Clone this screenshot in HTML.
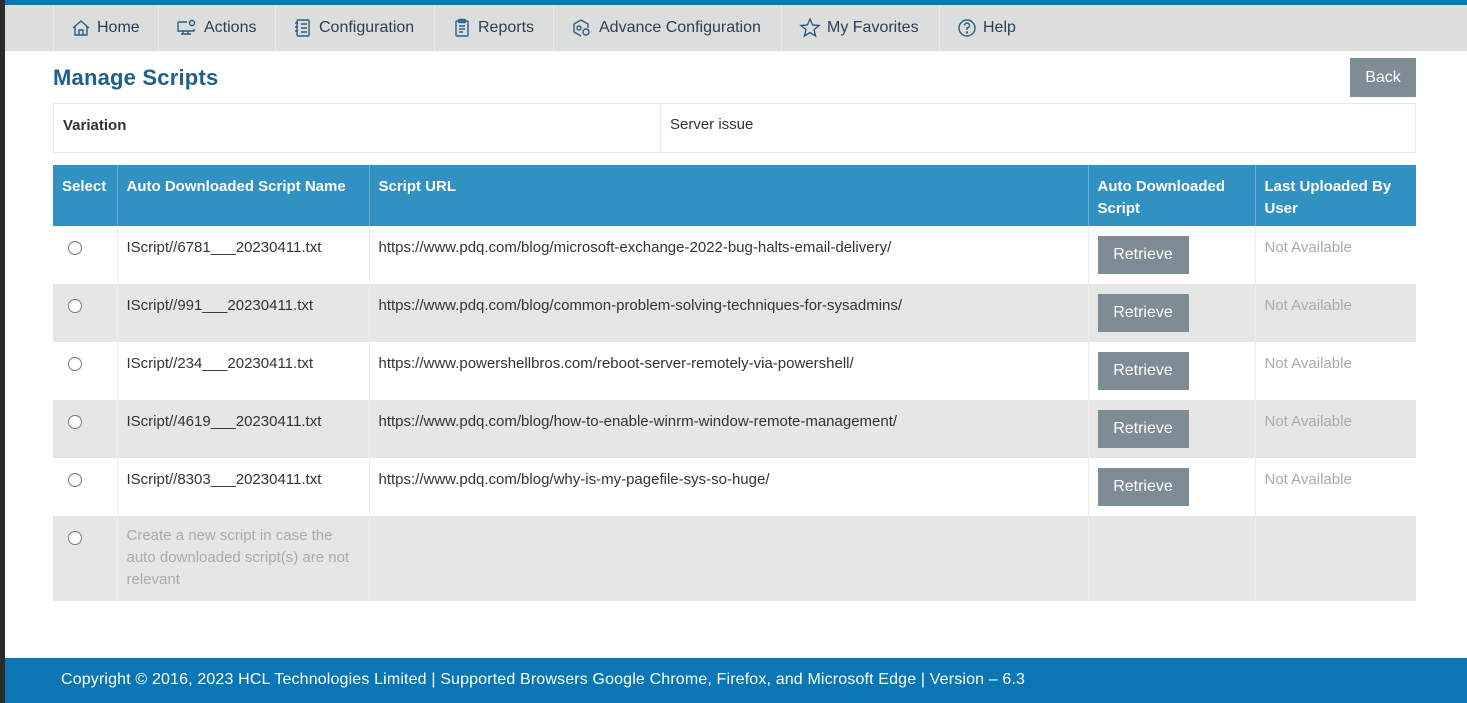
<!DOCTYPE html>
<html><head><meta charset="utf-8"><style>
*{box-sizing:border-box;margin:0;padding:0}
body{width:1467px;height:703px;overflow:hidden;background:#fff;font-family:"Liberation Sans",Arial,sans-serif;position:relative}
.lstrip{position:absolute;left:0;top:0;width:5px;height:703px;background:#2b2b2b;z-index:5}
.top{position:absolute;left:0;top:0;width:1467px;height:5px;background:#0a77b4}
.nav{position:absolute;left:0;top:5px;width:1467px;height:46px;background:#dcdedd}
.nav .it{position:absolute;top:0;height:46px;border-left:1px solid #e9eaea;display:flex;align-items:center;font-size:16px;color:#2a3f55;padding-left:17px}
.nav svg{margin-right:6px;stroke:#2a5c86;fill:none;stroke-width:1.4}
h1{position:absolute;left:53px;top:65px;font-size:22px;font-weight:bold;color:#1f5f8b;font-family:"Liberation Sans",sans-serif;letter-spacing:0.2px}
.back{position:absolute;left:1350px;top:58px;width:66px;height:39px;background:#7e8c96;color:#fff;font-size:16px;display:flex;align-items:center;justify-content:center}
.var{position:absolute;left:53px;top:103px;width:1363px;height:50px;border:1px solid #e6e6e6;font-size:15px;color:#333}
.var div{position:absolute;top:0;height:48px}
table{position:absolute;left:53px;top:165px;width:1363px;border-collapse:collapse;font-size:15px}
th{background:#3291c3;color:#fff;text-align:left;vertical-align:top;font-weight:bold;padding:11px 9px 0;height:61px;line-height:22px;border-left:1px solid #6aaed2}
th:first-child{border-left:none}
td{vertical-align:top;padding:13px 9px 0;height:58px;color:#333;border-left:1px solid #ededed;line-height:18px}
td:first-child{border-left:none}
tr.g td{background:#e6e6e6}
.r{display:inline-block;width:14px;height:14px;border:1px solid #777;border-radius:50%;background:#fff;margin:2px 0 0 6px}
.btn{display:block;width:91px;height:38px;background:#7e8c96;color:#fff;font-size:16px;display:flex;align-items:center;justify-content:center;margin:-3px 0 0 0}
.na{color:#aaa}
.foot{position:absolute;left:0;top:658px;width:1467px;height:45px;background:#0a77b4;color:#fff;font-size:16px;padding:13px 0 0 61px;letter-spacing:0.15px}
</style></head><body>
<div class="lstrip"></div>
<div class="top"></div>
<div class="nav">
<div class="it" style="left:53px;width:105px"><svg width="20" height="20" viewBox="0 0 20 20"><path d="M2 10 L10 3 L18 10 M4 8 V17 H16 V8 M8 17 V12 H12 V17"/></svg>Home</div>
<div class="it" style="left:158px;width:117px"><svg width="22" height="20" viewBox="0 0 22 20"><path d="M2 4 H11 M2 4 V13 H18 V11 M7 13 V16 M12 13 V16 M5 16 H15"/><circle cx="16" cy="5" r="2.5"/></svg>Actions</div>
<div class="it" style="left:275px;width:159px"><svg width="20" height="20" viewBox="0 0 20 20"><rect x="4" y="2" width="12" height="16" rx="1"/><path d="M2 5h3M2 9h3M2 13h3M8 6h6M8 10h6M8 14h6"/></svg>Configuration</div>
<div class="it" style="left:434px;width:119px"><svg width="20" height="20" viewBox="0 0 20 20"><rect x="4" y="3" width="12" height="15" rx="1"/><rect x="7" y="1.5" width="6" height="3"/><path d="M7 8h6M7 11h6M7 14h4"/></svg>Reports</div>
<div class="it" style="left:553px;width:228px"><svg width="22" height="20" viewBox="0 0 22 20"><path d="M10 2 L17 6 V10 M10 2 L3 6 V14 L10 18"/><circle cx="8" cy="10" r="2"/><circle cx="15" cy="14" r="3"/></svg>Advance Configuration</div>
<div class="it" style="left:781px;width:158px"><svg width="22" height="22" viewBox="0 0 22 22"><path d="M11 2 L13.6 8 L20 8.5 L15 12.7 L16.6 19 L11 15.6 L5.4 19 L7 12.7 L2 8.5 L8.4 8 Z"/></svg>My Favorites</div>
<div class="it" style="left:939px;width:100px"><svg width="20" height="20" viewBox="0 0 20 20"><circle cx="10" cy="10" r="8"/><path d="M7.5 7.5 A2.5 2.5 0 1 1 10 10 V12"/><circle cx="10" cy="14.5" r="0.5"/></svg>Help</div>
</div>
<h1>Manage Scripts</h1>
<div class="back">Back</div>
<div class="var"><div style="left:0;width:607px;border-right:1px solid #e6e6e6;font-weight:bold;padding:13px 0 0 9px">Variation</div><div style="left:607px;padding:12px 0 0 9px">Server issue</div></div>
<table>
<tr><th style="width:64px">Select</th><th style="width:252px">Auto Downloaded Script Name</th><th style="width:719px">Script URL</th><th style="width:167px">Auto Downloaded Script</th><th>Last Uploaded By User</th></tr>
<tr><td><span class="r"></span></td><td>IScript//6781___20230411.txt</td><td>https://www.pdq.com/blog/microsoft-exchange-2022-bug-halts-email-delivery/</td><td><span class="btn">Retrieve</span></td><td class="na">Not Available</td></tr>
<tr class="g"><td><span class="r"></span></td><td>IScript//991___20230411.txt</td><td>https://www.pdq.com/blog/common-problem-solving-techniques-for-sysadmins/</td><td><span class="btn">Retrieve</span></td><td class="na">Not Available</td></tr>
<tr><td><span class="r"></span></td><td>IScript//234___20230411.txt</td><td>https://www.powershellbros.com/reboot-server-remotely-via-powershell/</td><td><span class="btn">Retrieve</span></td><td class="na">Not Available</td></tr>
<tr class="g"><td><span class="r"></span></td><td>IScript//4619___20230411.txt</td><td>https://www.pdq.com/blog/how-to-enable-winrm-window-remote-management/</td><td><span class="btn">Retrieve</span></td><td class="na">Not Available</td></tr>
<tr><td><span class="r"></span></td><td>IScript//8303___20230411.txt</td><td>https://www.pdq.com/blog/why-is-my-pagefile-sys-so-huge/</td><td><span class="btn">Retrieve</span></td><td class="na">Not Available</td></tr>
<tr class="g"><td style="height:85px"><span class="r"></span></td><td class="na" style="line-height:22px;padding-top:9px">Create a new script in case the auto downloaded script(s) are not relevant</td><td></td><td></td><td></td></tr>
</table>
<div class="foot">Copyright © 2016, 2023 HCL Technologies Limited | Supported Browsers Google Chrome, Firefox, and Microsoft Edge | Version – 6.3</div>
</body></html>
